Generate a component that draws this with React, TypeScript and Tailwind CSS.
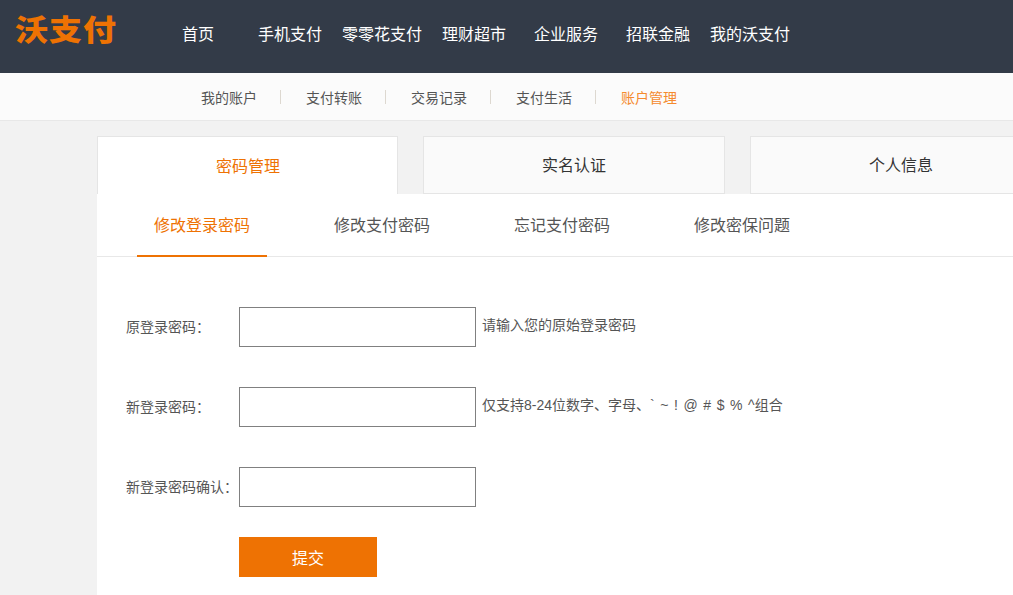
import React from 'react';

const mainNav = ['首页', '手机支付', '零零花支付', '理财超市', '企业服务', '招联金融', '我的沃支付'];
const subNav = ['我的账户', '支付转账', '交易记录', '支付生活', '账户管理'];
const tabs = ['密码管理', '实名认证', '个人信息'];
const innerTabs = ['修改登录密码', '修改支付密码', '忘记支付密码', '修改密保问题'];

const FormRow = (props: { label: string; hint?: string }) => {
    return (
        <div className="mb-10 flex h-10 items-center">
            <label className="w-[142px] shrink-0 whitespace-nowrap pl-[29px] text-sm text-[#555]">
                {props.label}
            </label>
            <input
                type="password"
                className="h-10 w-[237px] shrink-0 border border-[#808080] bg-white"
            />
            {props.hint && (
                <span className="ml-[6px] -translate-y-[2px] whitespace-nowrap text-sm text-[#555] [word-spacing:1.7px]">
                    {props.hint}
                </span>
            )}
        </div>
    );
};

const App = () => {
    return (
        <div
            className="h-[595px] w-[1013px] overflow-hidden bg-[#f2f2f2]"
            style={{ fontFamily: '"Liberation Sans", "Noto Sans CJK SC", sans-serif' }}
        >
            <header className="flex h-[73px] bg-[#333b48]">
                <div className="w-[152px] pl-[15px] pt-[11px]">
                    <div className="origin-top scale-y-[0.88] text-[33px] leading-[46px] font-black tracking-[1px] whitespace-nowrap text-[#ee7203]">
                        沃支付
                    </div>
                </div>
                <nav className="flex h-[69px] items-center">
                    {mainNav.map((item) => (
                        <a key={item} className="w-[92px] text-center text-base whitespace-nowrap text-white">
                            {item}
                        </a>
                    ))}
                </nav>
            </header>

            <div className="flex h-[48px] items-center border-b border-[#e8e8e8] bg-[#fbfbfb] pt-[3px] pl-[177px]">
                {subNav.map((item, index) => (
                    <a
                        key={item}
                        className={`relative flex h-[14px] w-[105px] items-center justify-center pr-[1px] text-sm whitespace-nowrap ${
                            index === 4 ? 'text-[#f58a2e]' : 'text-[#555]'
                        }`}
                    >
                        {item}
                        {index < 4 && <span className="absolute right-[1px] -top-[1px] h-[14px] w-px bg-[#ddd8d0]" />}
                    </a>
                ))}
            </div>

            <div className="ml-[97px] w-[1000px] pt-[15px]">
                <div className="flex gap-[25px]">
                    {tabs.map((tab, index) => (
                        <div
                            key={tab}
                            className={`flex h-[58px] items-center justify-center border border-[#e5e5e5] pt-[2px] text-base ${
                                index === 0 ? 'w-[301px] border-b-0 bg-white pl-[1px] text-[#ee7203]' : 'w-[302px] bg-[#fafafa] text-[#333]'
                            }`}
                        >
                            {tab}
                        </div>
                    ))}
                </div>

                <div className="h-[500px] bg-white">
                    <div className="flex h-[63px] border-b border-[#e8e8e8] pl-[40px]">
                        {innerTabs.map((tab, index) => (
                            <div
                                key={tab}
                                className={`mr-[50px] flex h-[63px] w-[130px] shrink-0 items-center justify-center text-base ${
                                    index === 0 ? 'border-b-2 border-[#ee7203] pt-[3px] text-[#ee7203]' : 'pt-[1px] text-[#555]'
                                }`}
                            >
                                {tab}
                            </div>
                        ))}
                    </div>
                    <form className="pt-[50px]">
                        <FormRow label="原登录密码：" hint="请输入您的原始登录密码" />
                        <FormRow label="新登录密码：" hint="仅支持8-24位数字、字母、` ~ ! @ # $ % ^组合" />
                        <FormRow label="新登录密码确认：" />
                        <button
                            type="button"
                            className="-mt-[10px] ml-[142px] block h-10 w-[138px] bg-[#ee7203] pt-[3px] text-base text-white"
                        >
                            提交
                        </button>
                    </form>
                </div>
            </div>
        </div>
    );
};

export default App;
